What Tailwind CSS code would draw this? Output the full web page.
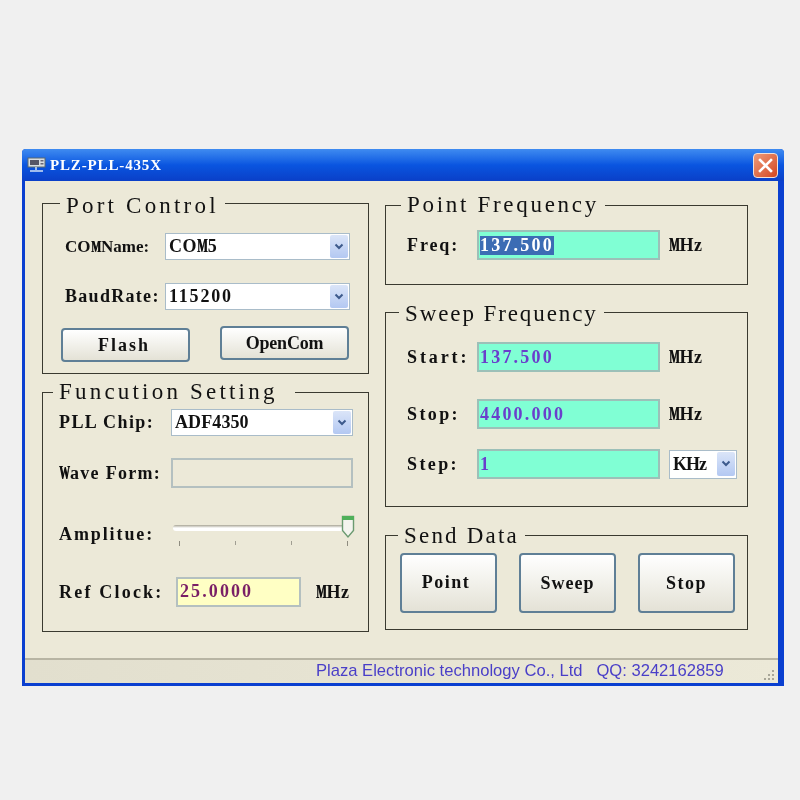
<!DOCTYPE html>
<html><head><meta charset="utf-8">
<script src="https://cdn.jsdelivr.net/npm/@tailwindcss/browser@4"></script>
</head>
<body class="bg-[#f0f0f0] w-[800px] h-[800px] overflow-hidden font-['Liberation_Serif',serif] text-[#111]">
<div class="pt-[149px] pl-[22px]">
<div class="w-[762px] h-[537px] flex flex-col rounded-t-[4px] bg-[#0a3fd0] blur-[0.35px]">
  <!-- title bar -->
  <div class="h-[32px] shrink-0 flex items-center pl-[5px] pr-[6px] rounded-t-[4px] bg-gradient-to-b from-[#3f8bf0] via-[#0a55e0] to-[#0a3fc8]">
    <svg width="20" height="16" viewBox="0 0 20 16" class="shrink-0"><rect x="1" y="1" width="17" height="9" fill="#d8dde0" stroke="#5a6a70"/><rect x="3" y="3" width="9" height="5" fill="#556"/><rect x="13.5" y="3" width="3" height="1.5" fill="#667"/><rect x="13.5" y="6" width="3" height="1.5" fill="#667"/><path d="M9 10v3M3 14h13" stroke="#cfe0f5" stroke-width="1.5"/></svg>
    <span class="ml-[3px] text-[15px] font-bold text-white leading-none tracking-[0.85px]">PLZ-PLL-435X</span>
    <div class="ml-auto w-[25px] h-[25px] rounded-[4px] border border-[#f0e0d8] bg-gradient-to-br from-[#ee9a78] to-[#d2441c] flex items-center justify-center">
      <svg width="15" height="15" viewBox="0 0 15 15"><path d="M2 2l11 11M13 2L2 13" stroke="#fff" stroke-width="2.6" stroke-linecap="square"/></svg>
    </div>
  </div>
  <!-- client -->
  <div class="ml-[3px] mr-[6px] mb-[3px] flex-1 flex flex-col bg-[#ece9d8]">
    <div class="flex-1 flex pl-[17px] pt-[22px]">
      <!-- left column -->
      <div class="w-[327px] flex flex-col">
        <section class="relative h-[171px] border border-[#3a3a30] pl-[22px] pt-[29px]">
          <h2 class="absolute left-[17px] -top-[10px] px-[6px] bg-[#ece9d8] text-[23px] leading-[24px] font-normal tracking-[3.2px] whitespace-nowrap">Port Control</h2>
          <div class="flex items-center h-[27px]">
            <span class="w-[100px] text-[17px] font-bold whitespace-nowrap">CO<b class="inline-block w-[10.5px] origin-left scale-x-[0.62] [text-shadow:1px_0_0_#000]">M</b>Name:</span>
            <div class="w-[185px] h-[27px] shrink-0 bg-white border border-[#a9bcc9] flex items-center pl-[3px] pr-[1px] text-[18px] font-bold tracking-[0.6px]"><span>CO<b class="inline-block w-[10.5px] origin-left scale-x-[0.62] [text-shadow:1px_0_0_#000]">M</b>5</span>
              <span class="ml-auto w-[18px] h-[23px] rounded-[2px] bg-gradient-to-b from-[#dbe5f8] to-[#b3c8f2] flex items-center justify-center"><svg width="10" height="8" viewBox="0 0 10 8"><path d="M1.5 1.5L5 5l3.5-3.5" fill="none" stroke="#3d5a8c" stroke-width="2"/></svg></span>
            </div>
          </div>
          <div class="flex items-center h-[27px] mt-[23px]">
            <span class="w-[100px] text-[18px] font-bold tracking-[1.3px] whitespace-nowrap">BaudRate:</span>
            <div class="w-[185px] h-[27px] shrink-0 bg-white border border-[#a9bcc9] flex items-center pl-[3px] pr-[1px] text-[18px] font-bold tracking-[1.8px]"><span>115200</span>
              <span class="ml-auto w-[18px] h-[23px] rounded-[2px] bg-gradient-to-b from-[#dbe5f8] to-[#b3c8f2] flex items-center justify-center"><svg width="10" height="8" viewBox="0 0 10 8"><path d="M1.5 1.5L5 5l3.5-3.5" fill="none" stroke="#3d5a8c" stroke-width="2"/></svg></span>
            </div>
          </div>
          <div class="flex items-start mt-[16px] -ml-[4px]">
            <button class="mt-[2px] w-[129px] h-[34px] shrink-0 rounded-[4px] border-2 border-[#5f7f96] bg-gradient-to-b from-white to-[#e4e2d6] text-[18px] font-bold tracking-[2px] pr-[3px]">Flash</button>
            <button class="ml-[30px] w-[129px] h-[34px] shrink-0 rounded-[4px] border-2 border-[#5f7f96] bg-gradient-to-b from-white to-[#e4e2d6] text-[18px] font-bold tracking-[-0.2px]">OpenCom</button>
          </div>
        </section>
        <section class="relative mt-[18px] h-[240px] border border-[#3a3a30] pl-[16px] pt-[16px]">
          <h2 class="absolute left-[10px] -top-[13px] pl-[6px] pr-[17px] bg-[#ece9d8] text-[23px] leading-[24px] font-normal tracking-[3.2px] whitespace-nowrap">Funcution Setting</h2>
          <div class="flex items-center h-[27px]">
            <span class="w-[112px] text-[18px] font-bold tracking-[1.4px] whitespace-nowrap">PLL Chip:</span>
            <div class="w-[182px] h-[27px] bg-white border border-[#a9bcc9] flex items-center pl-[3px] pr-[1px] text-[18px] font-bold tracking-[0.1px]"><span>ADF4350</span>
              <span class="ml-auto w-[18px] h-[23px] rounded-[2px] bg-gradient-to-b from-[#dbe5f8] to-[#b3c8f2] flex items-center justify-center"><svg width="10" height="8" viewBox="0 0 10 8"><path d="M1.5 1.5L5 5l3.5-3.5" fill="none" stroke="#3d5a8c" stroke-width="2"/></svg></span>
            </div>
          </div>
          <div class="flex items-center h-[30px] mt-[22px]">
            <span class="w-[112px] text-[18px] font-bold whitespace-nowrap tracking-[1.3px]"><b class="inline-block w-[11px] origin-left scale-x-[0.6] [text-shadow:1px_0_0_#000]">W</b>ave Form:</span>
            <div class="w-[182px] h-[30px] border-2 border-[#b4c0c0]"></div>
          </div>
          <div class="flex h-[36px] mt-[28px]">
            <span class="w-[114px] pt-[5px] text-[18px] font-bold tracking-[1.9px]">Amplitue:</span>
            <div class="relative w-[182px] h-[36px]">
              <div class="absolute left-0 top-[9px] w-[172px] h-[6px] rounded-[3px] bg-gradient-to-b from-[#a8a595] via-white to-white"></div>
              <span class="absolute left-[6px] top-[25px] w-px h-[5px] bg-[#8e8c80]"></span>
              <span class="absolute left-[62px] top-[25px] w-px h-[4px] bg-[#a09e92]"></span>
              <span class="absolute left-[118px] top-[25px] w-px h-[4px] bg-[#a09e92]"></span>
              <span class="absolute left-[174px] top-[25px] w-px h-[5px] bg-[#8e8c80]"></span>
              <svg class="absolute left-[168px] -top-[1px]" width="14" height="24" viewBox="0 0 14 24"><path d="M1.5 1.5h11v14L7 22l-5.5-6.5z" fill="#f4f4ee" stroke="#6b9a70" stroke-width="1.4"/><rect x="1" y="1" width="12" height="4" fill="#4fb05a"/></svg>
            </div>
          </div>
          <div class="flex items-center h-[30px] mt-[25px]">
            <span class="w-[117px] text-[18px] font-bold whitespace-nowrap tracking-[2.2px]">Ref Clock:</span>
            <div class="w-[125px] h-[30px] border-2 border-[#b4c0c0] bg-[#ffffc4] flex items-center pl-[2px] pb-[2px] text-[18px] font-bold tracking-[2.1px] text-[#7a1f66]">25.0000</div>
            <span class="ml-[15px] text-[18px] font-bold tracking-[0.5px]"><b class="inline-block w-[10.5px] origin-left scale-x-[0.62] [text-shadow:1px_0_0_#000]">M</b>Hz</span>
          </div>
        </section>
      </div>
      <!-- right column -->
      <div class="ml-[16px] w-[363px] flex flex-col">
        <section class="relative mt-[2px] h-[80px] border border-[#3a3a30] pl-[21px] pt-[24px]">
          <h2 class="absolute left-[15px] -top-[13px] px-[6px] bg-[#ece9d8] text-[23px] leading-[24px] font-normal whitespace-nowrap tracking-[2.7px]">Point Frequency</h2>
          <div class="flex items-center h-[30px]">
            <span class="w-[70px] text-[18px] font-bold tracking-[1.9px]">Freq:</span>
            <div class="w-[183px] h-[30px] border-2 border-[#9cc0b8] bg-[#80ffd4] flex items-center pl-[1px] text-[18px] font-bold"><span class="bg-[#3c6cb4] text-white leading-[19px] tracking-[2.2px]">137.500</span></div>
            <span class="ml-[9px] text-[18px] font-bold tracking-[0.5px]"><b class="inline-block w-[10.5px] origin-left scale-x-[0.62] [text-shadow:1px_0_0_#000]">M</b>Hz</span>
          </div>
        </section>
        <section class="relative mt-[27px] h-[195px] border border-[#3a3a30] pl-[21px] pt-[29px]">
          <h2 class="absolute left-[13px] -top-[11px] px-[6px] bg-[#ece9d8] text-[23px] leading-[24px] font-normal whitespace-nowrap tracking-[1.9px]">Sweep Frequency</h2>
          <div class="flex items-center h-[30px]">
            <span class="w-[70px] text-[18px] font-bold tracking-[2.9px]">Start:</span>
            <div class="w-[183px] h-[30px] border-2 border-[#9cc0b8] bg-[#80ffd4] flex items-center pl-[1px] text-[18px] font-bold tracking-[2.2px] text-[#6a3fcc]">137.500</div>
            <span class="ml-[9px] text-[18px] font-bold tracking-[0.5px]"><b class="inline-block w-[10.5px] origin-left scale-x-[0.62] [text-shadow:1px_0_0_#000]">M</b>Hz</span>
          </div>
          <div class="flex items-center h-[30px] mt-[27px]">
            <span class="w-[70px] text-[18px] font-bold tracking-[2.4px]">Stop:</span>
            <div class="w-[183px] h-[30px] border-2 border-[#9cc0b8] bg-[#80ffd4] flex items-center pl-[1px] text-[18px] font-bold tracking-[2.2px] text-[#6a3fcc]">4400.000</div>
            <span class="ml-[9px] text-[18px] font-bold tracking-[0.5px]"><b class="inline-block w-[10.5px] origin-left scale-x-[0.62] [text-shadow:1px_0_0_#000]">M</b>Hz</span>
          </div>
          <div class="flex items-center h-[30px] mt-[20px]">
            <span class="w-[70px] text-[18px] font-bold tracking-[2.4px]">Step:</span>
            <div class="w-[183px] h-[30px] border-2 border-[#9cc0b8] bg-[#80ffd4] flex items-center pl-[1px] text-[18px] font-bold tracking-[2.2px] text-[#6a3fcc]">1</div>
            <div class="ml-[9px] w-[68px] h-[29px] bg-white border border-[#a9bcc9] flex items-center pl-[3px] pr-[1px] text-[18px] font-bold tracking-[-1px]"><span>KHz</span>
              <span class="ml-auto w-[18px] h-[24px] rounded-[2px] bg-gradient-to-b from-[#dbe5f8] to-[#b3c8f2] flex items-center justify-center"><svg width="10" height="8" viewBox="0 0 10 8"><path d="M1.5 1.5L5 5l3.5-3.5" fill="none" stroke="#3d5a8c" stroke-width="2"/></svg></span>
            </div>
          </div>
        </section>
        <section class="relative mt-[28px] h-[95px] border border-[#3a3a30] pl-[14px] pt-[17px]">
          <h2 class="absolute left-[12px] -top-[12px] px-[6px] bg-[#ece9d8] text-[23px] leading-[24px] font-normal whitespace-nowrap tracking-[2.2px]">Send Data</h2>
          <div class="flex gap-[22px]">
            <button class="w-[97px] h-[60px] rounded-[4px] border-2 border-[#5f7f96] bg-gradient-to-b from-white to-[#e4e2d6] text-[18px] font-bold tracking-[1.5px] pr-[5px] pb-[2px]">Point</button>
            <button class="w-[97px] h-[60px] rounded-[4px] border-2 border-[#5f7f96] bg-gradient-to-b from-white to-[#e4e2d6] text-[18px] font-bold tracking-[1px]">Sweep</button>
            <button class="w-[97px] h-[60px] rounded-[4px] border-2 border-[#5f7f96] bg-gradient-to-b from-white to-[#e4e2d6] text-[18px] font-bold tracking-[1.5px]">Stop</button>
          </div>
        </section>
      </div>
    </div>
    <!-- status bar -->
    <div class="h-[25px] shrink-0 border-t-2 border-[#b8b5a4] bg-gradient-to-r from-[#e2dfce] to-[#ece9d8] flex items-center pl-[291px] pr-[2px] font-['Liberation_Sans',sans-serif] text-[16.6px] text-[#4a3fc8]">
      <span class="whitespace-pre">Plaza Electronic technology Co., Ltd   QQ: 3242162859</span>
      <svg class="ml-auto self-end mb-[1px]" width="13" height="13" viewBox="0 0 13 13" fill="#a8a698"><rect x="9" y="1" width="2" height="2"/><rect x="5" y="5" width="2" height="2"/><rect x="9" y="5" width="2" height="2"/><rect x="1" y="9" width="2" height="2"/><rect x="5" y="9" width="2" height="2"/><rect x="9" y="9" width="2" height="2"/></svg>
    </div>
  </div>
</div>
</div>
</body></html>
